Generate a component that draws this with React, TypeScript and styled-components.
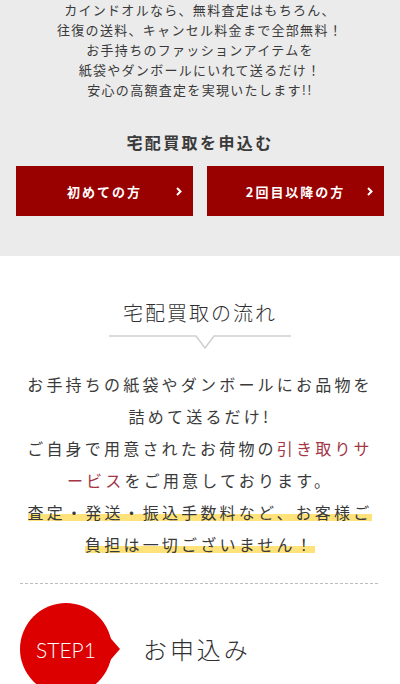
import React from "react";
import styled, { createGlobalStyle } from "styled-components";

const GlobalStyle = createGlobalStyle`
  html, body {
    margin: 0;
    padding: 0;
    background: #fff;
  }
  body {
    font-family: "Noto Sans CJK JP", "Noto Sans", sans-serif;
    color: #333;
    overflow: hidden;
  }
`;

const Page = styled.div`
  width: 400px;
`;

const ApplySection = styled.section`
  background: #ebebeb;
  padding: 0 0 40px;
`;

const Intro = styled.p`
  margin: 0;
  font-size: 13px;
  line-height: 20px;
  letter-spacing: 0.1em;
  text-align: center;
  color: #3a3a3a;
`;

const ApplyTitle = styled.h3`
  margin: 30px 0 12px;
  font-size: 16px;
  line-height: 24px;
  font-weight: 700;
  letter-spacing: 0.15em;
  text-align: center;
  color: #3a3a3a;
`;

const ButtonRow = styled.div`
  display: grid;
  grid-template-columns: 1fr 1fr;
  gap: 14px;
  padding: 0 16px;
`;

const ApplyButton = styled.a`
  position: relative;
  display: flex;
  align-items: center;
  justify-content: center;
  height: 50px;
  background: #990000;
  color: #fff;
  font-size: 13px;
  font-weight: 700;
  letter-spacing: 0.15em;
  text-decoration: none;
  cursor: pointer;
`;

const Chevron = styled.svg`
  position: absolute;
  right: 11px;
  top: 50%;
  margin-top: -4px;
`;

const FlowSection = styled.section`
  background: #fff;
  padding-top: 42px;
`;

const FlowTitle = styled.h2`
  margin: 0;
  font-size: 20px;
  line-height: 30px;
  font-weight: 300;
  letter-spacing: 0.1em;
  text-align: center;
  color: #2f2f2f;
`;

const TitleRule = styled.svg`
  display: block;
  margin: 7px auto 0;
`;

const FlowText = styled.p`
  margin: 18px 0 0;
  padding: 0 20px;
  font-size: 16px;
  line-height: 32px;
  font-weight: 400;
  letter-spacing: 0.2em;
  text-align: center;
  color: #3a3a3a;
`;

const Accent = styled.span`
  color: #a33545;
`;

const Marker = styled.span`
  background: linear-gradient(
    transparent 60%,
    #ffe37a 60%,
    #ffe37a 86%,
    transparent 86%
  );
`;

const DashedRule = styled.div`
  margin: 23px 20px 0;
  height: 1px;
  background: repeating-linear-gradient(
    to right,
    #bdbdbd 0 3px,
    transparent 3px 5px
  );
`;

const StepRow = styled.div`
  display: flex;
  align-items: center;
  padding: 19px 20px 0;
`;

const StepBadge = styled.div`
  position: relative;
  flex: none;
  width: 92px;
  height: 92px;
  border-radius: 50%;
  background: #dd0000;
  color: #fff;
  display: flex;
  align-items: center;
  justify-content: center;
  font-family: Lato, "Open Sans", sans-serif;
  font-weight: 300;
  font-size: 21px;
  letter-spacing: 0;

  &::after {
    content: "";
    position: absolute;
    right: -8px;
    top: 50%;
    margin-top: -16px;
    border-left: 14px solid #dd0000;
    border-top: 16px solid transparent;
    border-bottom: 16px solid transparent;
  }
`;

const StepTitle = styled.h3`
  margin: 0 0 0 31px;
  font-size: 24px;
  line-height: 32px;
  font-weight: 300;
  letter-spacing: 0.12em;
  color: #2f2f2f;
`;

function ApplyLink({ label }: { label: string }) {
  return (
    <ApplyButton>
      {label}
      <Chevron width="6" height="9" viewBox="0 0 6 9">
        <polyline
          points="1,1 4.5,4.5 1,8"
          fill="none"
          stroke="#fff"
          strokeWidth="2"
        />
      </Chevron>
    </ApplyButton>
  );
}

export default function App() {
  return (
    <Page>
      <GlobalStyle />
      <ApplySection>
        <Intro>
          カインドオルなら、無料査定はもちろん、
          <br />
          往復の送料、キャンセル料金まで全部無料！
          <br />
          お手持ちのファッションアイテムを
          <br />
          紙袋やダンボールにいれて送るだけ！
          <br />
          安心の高額査定を実現いたします!!
        </Intro>
        <ApplyTitle>宅配買取を申込む</ApplyTitle>
        <ButtonRow>
          <ApplyLink label="初めての方" />
          <ApplyLink label="2回目以降の方" />
        </ButtonRow>
      </ApplySection>

      <FlowSection>
        <FlowTitle>宅配買取の流れ</FlowTitle>
        <TitleRule width="182" height="15" viewBox="0 0 182 15">
          <polyline
            points="0,1 87,1 96,13 105,1 182,1"
            fill="none"
            stroke="#cfcfcf"
            strokeWidth="1.5"
          />
        </TitleRule>
        <FlowText>
          お手持ちの紙袋やダンボールにお品物を詰めて送るだけ!
          <br />
          ご自身で用意されたお荷物の<Accent>引き取りサービス</Accent>
          をご用意しております。
          <br />
          <Marker>査定・発送・振込手数料など、お客様ご負担は一切ございません！</Marker>
        </FlowText>
        <DashedRule />
        <StepRow>
          <StepBadge>STEP1</StepBadge>
          <StepTitle>お申込み</StepTitle>
        </StepRow>
      </FlowSection>
    </Page>
  );
}
